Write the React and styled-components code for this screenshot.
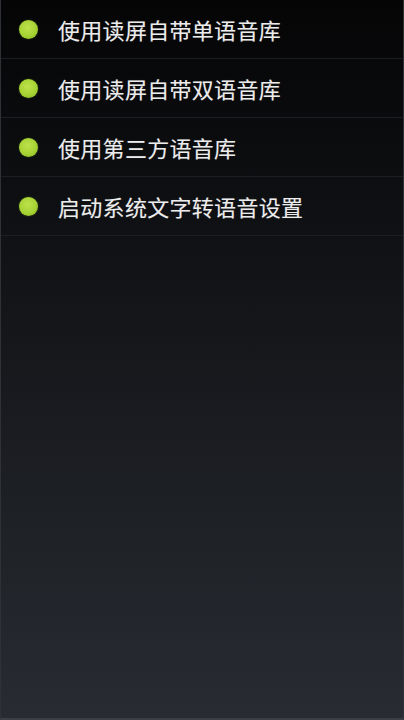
import React from 'react';
import styled, {createGlobalStyle} from 'styled-components';

const GlobalStyle = createGlobalStyle`
    html, body {
        margin: 0;
        padding: 0;
        background: #0b0b0d;
    }
`;

const Screen = styled.div`
    width: 404px;
    height: 720px;
    box-sizing: border-box;
    background: linear-gradient(180deg, #050506 0%, #0c0d0f 22%, #14161a 45%, #1d2025 70%, #282c32 100%);
    border-left: 1px solid #2e3236;
    border-right: 1px solid #2e3236;
    border-bottom: 2px solid #3b4044;
    font-family: "Noto Sans CJK SC", "Noto Sans", sans-serif;
    overflow: hidden;
`;

const List = styled.ul`
    list-style: none;
    margin: 0;
    padding: 0;
`;

const Item = styled.li`
    display: flex;
    align-items: center;
    height: 58px;
    padding-left: 18px;
    gap: 20px;
    border-bottom: 1px solid #1d1e21;
    box-sizing: content-box;
`;

const Dot = styled.span`
    flex: none;
    width: 19px;
    height: 19px;
    border-radius: 50%;
    background: radial-gradient(circle at 45% 40%, #bde24c 0%, #a6d233 55%, #86b41f 100%);
    box-shadow: 0 0 2px rgba(150, 200, 40, 0.35);
`;

const Label = styled.span`
    color: #ececec;
    font-size: 22px;
    line-height: 1;
    letter-spacing: 0.3px;
    margin-bottom: 1px;
    text-shadow: 0 0 1px rgba(255, 255, 255, 0.25);
`;

const items = [
    '使用读屏自带单语音库',
    '使用读屏自带双语音库',
    '使用第三方语音库',
    '启动系统文字转语音设置',
];

export default function App() {
    return (
        <>
            <GlobalStyle/>
            <Screen>
                <List>
                    {items.map(text => (
                        <Item key={text}>
                            <Dot/>
                            <Label>{text}</Label>
                        </Item>
                    ))}
                </List>
            </Screen>
        </>
    );
}
